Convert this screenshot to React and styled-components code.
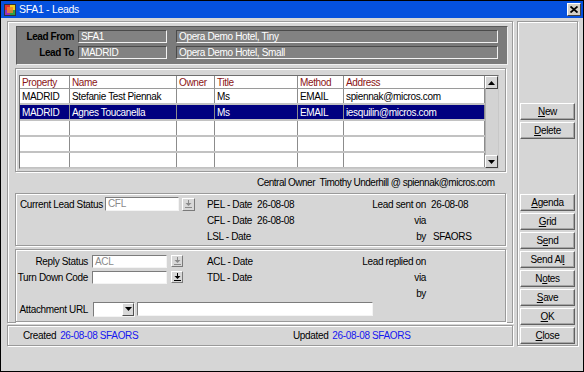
import React from "react";
import styled, { createGlobalStyle, css } from "styled-components";

const FONT = `"Liberation Sans", Arial, Helvetica, sans-serif`;

const GlobalStyle = createGlobalStyle`
  html, body { margin: 0; padding: 0; background: #d6d6d6; }
  body { font-family: ${FONT}; font-size: 10px; letter-spacing: -0.35px; color: #000; }
  *, *::before, *::after { box-sizing: border-box; }
`;

const etched = css`
  border: 1px solid #9a9a9a;
  box-shadow: inset 1px 1px 0 #fff, 1px 1px 0 #fff;
`;

const Window = styled.div`
  width: 584px;
  height: 372px;
  border: 1px solid #000;
  background: #d6d6d6;
  display: flex;
  flex-direction: column;
  overflow: hidden;
`;

const TitleBar = styled.div`
  height: 17px;
  flex: none;
  background: #0551de;
  color: #fff;
  display: flex;
  align-items: center;
  padding: 0 2px 0 3px;
  gap: 3px;
  font-size: 10.5px;
  letter-spacing: -0.3px;
`;

const TitleText = styled.span`
  flex: 1;
  line-height: 17px;
`;

const CloseBox = styled.div`
  width: 14px;
  height: 13px;
  background: #d4d0c8;
  border: 1px solid;
  border-color: #fff #404040 #404040 #fff;
  display: flex;
  align-items: center;
  justify-content: center;
`;

const Body = styled.div`
  flex: 1;
  display: flex;
  gap: 4px;
  padding: 3px 4px 0 6px;
  min-height: 0;
`;

const LeftCol = styled.div`
  width: 506px;
  display: flex;
  flex-direction: column;
  gap: 2px;
`;

const MainFrame = styled.div`
  ${etched};
  height: 302px;
  padding: 4px 4px 0 8px;
  display: flex;
  flex-direction: column;
`;

const HeaderPanel = styled.div`
  height: 39px;
  flex: none;
  background: #7b7b7b;
  border: 1px solid;
  border-color: #5a5a5a #f0f0f0 #f0f0f0 #5a5a5a;
  padding: 3px 9px 0 0;
  display: flex;
  flex-direction: column;
  gap: 3px;
`;

const HeaderRow = styled.div`
  display: flex;
  align-items: center;
  height: 13px;
`;

const HeaderLabel = styled.div`
  width: 57px;
  text-align: right;
  font-weight: bold;
  margin-right: 4px;
  letter-spacing: -0.4px;
`;

const HeaderField = styled.div`
  width: ${(p) => (p.$wide ? "auto" : "89px")};
  flex: ${(p) => (p.$wide ? "1" : "none")};
  margin-left: ${(p) => (p.$wide ? "9px" : "0")};
  height: 13px;
  background: #828282;
  border: 1px solid;
  border-color: #4a4a4a #f2f2f2 #f2f2f2 #4a4a4a;
  color: #fff;
  padding-left: 2px;
  line-height: 11px;
  white-space: nowrap;
  overflow: hidden;
`;

const GridGroup = styled.div`
  ${etched};
  margin: 3px 2px 0 -1px;
  padding: 6px 6px 2px 3px;
  height: 104px;
  flex: none;
`;

const Grid = styled.div`
  display: flex;
  width: 480px;
  height: 94px;
  border: 1px solid #6e6e6e;
  border-right-color: #c8c8c8;
  border-bottom-color: #c8c8c8;
  background: #fff;
  overflow: hidden;
`;

const GridTable = styled.div`
  width: 465px;
  display: flex;
  flex-direction: column;
`;

const cols = "50px 107px 38px 83px 46px 141px";

const GridRow = styled.div`
  display: grid;
  grid-template-columns: ${cols};
  height: ${(p) => (p.$head ? "13px" : "16px")};
  flex: none;
  border-bottom: ${(p) => (p.$head ? "1px solid #9a9a9a" : "2px solid #c2c2c2")};
  background: ${(p) => (p.$selected ? "#000080" : "#fff")};
  color: ${(p) => (p.$head ? "#8b1414" : p.$selected ? "#fff" : "#000")};
`;

const Cell = styled.div`
  border-right: 1px solid #8c8c8c;
  padding-left: 2px;
  display: flex;
  align-items: center;
  white-space: nowrap;
  overflow: hidden;
`;

const ScrollBar = styled.div`
  width: 13px;
  flex: none;
  background: #d3d3d3;
  border-left: 1px solid #b0b0b0;
  display: flex;
  flex-direction: column;
  justify-content: space-between;
`;

const ScrollBtn = styled.div`
  width: 13px;
  height: 13px;
  margin-left: -1px;
  background: #d6d6d6;
  border: 1px solid;
  border-color: #fff #404040 #404040 #fff;
  display: flex;
  align-items: center;
  justify-content: center;
`;

const OwnerLine = styled.div`
  height: 21px;
  flex: none;
  margin: 0 2px 0 -1px;
  padding: 0 6px 0 242px;
  display: flex;
  align-items: center;
  white-space: nowrap;
  letter-spacing: -0.5px;
`;

const Panel = styled.div`
  ${etched};
  margin: ${(p) => (p.$gapTop ? "3px" : "0")} 2px 0 -1px;
  height: ${(p) => p.$h}px;
  flex: none;
  padding-top: ${(p) => p.$pt}px;
  display: flex;
  flex-direction: column;
`;

const PanelCols = styled.div`
  display: flex;
`;

const Block = styled.div`
  width: ${(p) => (p.$w ? `${p.$w}px` : "auto")};
  flex: ${(p) => (p.$w ? "none" : "1")};
  display: flex;
  flex-direction: column;
`;

const Line = styled.div`
  height: 16px;
  display: flex;
  align-items: center;
  white-space: nowrap;
`;

const Label = styled.div`
  width: ${(p) => p.$w}px;
  flex: none;
  text-align: ${(p) => (p.$right ? "right" : "left")};
  padding-left: ${(p) => p.$pl || 0}px;
  margin-right: ${(p) => p.$mr || 0}px;
  white-space: nowrap;
`;

const Value = styled.div`
  margin-left: ${(p) => p.$ml || 0}px;
  color: ${(p) => (p.$blue ? "#1515f0" : "inherit")};
`;

const TextField = styled.div`
  width: ${(p) => p.$w}px;
  height: ${(p) => p.$h || 14}px;
  flex: none;
  background: #fff;
  border: 1px solid;
  border-color: #7c7c7c #f4f4f4 #f4f4f4 #7c7c7c;
  color: #8a8a8a;
  padding-left: 2px;
  line-height: ${(p) => (p.$h || 14) - 2}px;
  margin-right: ${(p) => p.$mr || 0}px;
`;

const DropBtn = styled.div`
  width: ${(p) => p.$s}px;
  height: ${(p) => p.$s}px;
  flex: none;
  background: #d8d8d8;
  border: 1px solid;
  border-color: #fff #7a7a7a #7a7a7a #fff;
  display: flex;
  align-items: center;
  justify-content: center;
`;

const Combo = styled.div`
  width: 42px;
  height: 15px;
  flex: none;
  background: #fff;
  border: 1px solid;
  border-color: #7c7c7c #f4f4f4 #f4f4f4 #7c7c7c;
  display: flex;
  justify-content: flex-end;
  margin-right: 2px;
`;

const ComboBtn = styled.div`
  width: 12px;
  height: 13px;
  background: #d8d8d8;
  border: 1px solid;
  border-color: #fff #505050 #505050 #fff;
  display: flex;
  align-items: center;
  justify-content: center;
`;

const Footer = styled.div`
  ${etched};
  height: 21px;
  flex: none;
  display: grid;
  grid-template-columns: 270px 1fr;
  align-items: center;
  padding-left: 15px;
`;

const FooterItem = styled.div`
  display: flex;
  gap: 4px;
  white-space: nowrap;
`;

const RightPanel = styled.div`
  ${etched};
  width: 61px;
  height: 325px;
  flex: none;
  display: flex;
  flex-direction: column;
  padding: 81px 2px 1px 2px;
`;

const BtnGroup = styled.div`
  display: flex;
  flex-direction: column;
  gap: 2px;
  margin-top: ${(p) => (p.$bottom ? "auto" : "0")};
`;

const Button = styled.div`
  width: 55px;
  height: 17px;
  background: #d6d6d6;
  border: 1px solid;
  border-color: #fff #606060 #606060 #fff;
  box-shadow: inset -1px -1px 0 #a6a6a6;
  display: flex;
  align-items: center;
  justify-content: center;
  white-space: nowrap;
  u { text-decoration: underline; text-underline-offset: 1px; }
`;

const ArrowBar = ({ color }) => (
  <svg width="7" height="8" viewBox="0 0 7 8">
    <rect x="3" y="0" width="1" height="4" fill={color} />
    <polygon points="0.5,3 6.5,3 3.5,6" fill={color} />
    <rect x="0" y="7" width="7" height="1" fill={color} />
  </svg>
);

const Tri = ({ up }) => (
  <svg width="7" height="4" viewBox="0 0 7 4">
    <polygon points={up ? "3.5,0 7,4 0,4" : "0,0 7,0 3.5,4"} fill="#000" />
  </svg>
);

const AppIcon = () => (
  <svg width="12" height="12" viewBox="0 0 12 12">
    <rect x="0" y="0" width="12" height="12" fill="#fff" />
    <rect x="1" y="1" width="5" height="5" fill="#e03030" />
    <rect x="6" y="1" width="5" height="5" fill="#f0d020" />
    <rect x="1" y="6" width="5" height="5" fill="#9030c0" />
    <rect x="6" y="6" width="5" height="5" fill="#30a040" />
    <rect x="3" y="3" width="6" height="6" fill="#f08030" opacity="0.8" />
    <rect x="0.5" y="0.5" width="11" height="11" fill="none" stroke="#333" strokeWidth="1" />
  </svg>
);

const CloseX = () => (
  <svg width="8" height="7" viewBox="0 0 8 7">
    <path d="M0.5 0.5 L7.5 6.5 M7.5 0.5 L0.5 6.5" stroke="#000" strokeWidth="1.8" />
  </svg>
);

const rows = [
  { p: "MADRID", n: "Stefanie Test Piennak", o: "", t: "Ms", m: "EMAIL", a: "spiennak@micros.com" },
  { p: "MADRID", n: "Agnes Toucanella", o: "", t: "Ms", m: "EMAIL", a: "iesquilin@micros.com", sel: true },
  { p: "", n: "", o: "", t: "", m: "", a: "" },
  { p: "", n: "", o: "", t: "", m: "", a: "" },
  { p: "", n: "", o: "", t: "", m: "", a: "" },
];

export default function App() {
  return (
    <>
      <GlobalStyle />
      <Window>
        <TitleBar>
          <AppIcon />
          <TitleText>SFA1 - Leads</TitleText>
          <CloseBox>
            <CloseX />
          </CloseBox>
        </TitleBar>
        <Body>
          <LeftCol>
            <MainFrame>
              <HeaderPanel>
                <HeaderRow>
                  <HeaderLabel>Lead From</HeaderLabel>
                  <HeaderField>SFA1</HeaderField>
                  <HeaderField $wide>Opera Demo Hotel, Tiny</HeaderField>
                </HeaderRow>
                <HeaderRow>
                  <HeaderLabel>Lead To</HeaderLabel>
                  <HeaderField>MADRID</HeaderField>
                  <HeaderField $wide>Opera Demo Hotel, Small</HeaderField>
                </HeaderRow>
              </HeaderPanel>

              <GridGroup>
                <Grid>
                  <GridTable>
                    <GridRow $head>
                      <Cell>Property</Cell>
                      <Cell>Name</Cell>
                      <Cell>Owner</Cell>
                      <Cell>Title</Cell>
                      <Cell>Method</Cell>
                      <Cell>Address</Cell>
                    </GridRow>
                    {rows.map((r, i) => (
                      <GridRow key={i} $selected={r.sel}>
                        <Cell>{r.p}</Cell>
                        <Cell>{r.n}</Cell>
                        <Cell>{r.o}</Cell>
                        <Cell>{r.t}</Cell>
                        <Cell>{r.m}</Cell>
                        <Cell>{r.a}</Cell>
                      </GridRow>
                    ))}
                  </GridTable>
                  <ScrollBar>
                    <ScrollBtn>
                      <Tri up />
                    </ScrollBtn>
                    <ScrollBtn>
                      <Tri />
                    </ScrollBtn>
                  </ScrollBar>
                </Grid>
              </GridGroup>

              <OwnerLine>Central Owner&nbsp;&nbsp;Timothy Underhill @ spiennak@micros.com</OwnerLine>

              <Panel $h={53} $pt={2}>
                <PanelCols>
                  <Block $w={191}>
                    <Line>
                      <Label $w={89} $pl={4}>Current Lead Status</Label>
                      <TextField $w={74} $mr={3}>CFL</TextField>
                      <DropBtn $s={13}>
                        <ArrowBar color="#8a8a8a" />
                      </DropBtn>
                    </Line>
                  </Block>
                  <Block $w={150}>
                    <Line>
                      <Label $w={50}>PEL - Date</Label>
                      <Value>26-08-08</Value>
                    </Line>
                    <Line>
                      <Label $w={50}>CFL - Date</Label>
                      <Value>26-08-08</Value>
                    </Line>
                    <Line>
                      <Label $w={50}>LSL - Date</Label>
                    </Line>
                  </Block>
                  <Block>
                    <Line>
                      <Label $w={69} $right>Lead sent on</Label>
                      <Value $ml={5}>26-08-08</Value>
                    </Line>
                    <Line>
                      <Label $w={69} $right>via</Label>
                    </Line>
                    <Line>
                      <Label $w={69} $right>by</Label>
                      <Value $ml={7}>SFAORS</Value>
                    </Line>
                  </Block>
                </PanelCols>
              </Panel>

              <Panel $gapTop $h={73} $pt={3}>
                <PanelCols>
                  <Block $w={191}>
                    <Line>
                      <Label $w={72} $right $mr={4}>Reply Status</Label>
                      <TextField $w={75} $h={13} $mr={4}>ACL</TextField>
                      <DropBtn $s={12}>
                        <ArrowBar color="#8a8a8a" />
                      </DropBtn>
                    </Line>
                    <Line>
                      <Label $w={72} $right $mr={4}>Turn Down Code</Label>
                      <TextField $w={75} $h={13} $mr={4} />
                      <DropBtn $s={12}>
                        <ArrowBar color="#000" />
                      </DropBtn>
                    </Line>
                  </Block>
                  <Block $w={150}>
                    <Line>
                      <Label $w={50}>ACL - Date</Label>
                    </Line>
                    <Line>
                      <Label $w={50}>TDL - Date</Label>
                    </Line>
                  </Block>
                  <Block>
                    <Line>
                      <Label $w={69} $right>Lead replied on</Label>
                    </Line>
                    <Line>
                      <Label $w={69} $right>via</Label>
                    </Line>
                    <Line>
                      <Label $w={69} $right>by</Label>
                    </Line>
                  </Block>
                </PanelCols>
                <Line>
                  <Label $w={72} $right $mr={5}>Attachment URL</Label>
                  <Combo>
                    <ComboBtn>
                      <Tri />
                    </ComboBtn>
                  </Combo>
                  <TextField $w={236} $h={14} />
                </Line>
              </Panel>
            </MainFrame>
            <Footer>
              <FooterItem>
                <span>Created</span>
                <Value $blue>26-08-08 SFAORS</Value>
              </FooterItem>
              <FooterItem>
                <span>Updated</span>
                <Value $blue>26-08-08 SFAORS</Value>
              </FooterItem>
            </Footer>
          </LeftCol>
          <RightPanel>
            <BtnGroup>
              <Button><u>N</u>ew</Button>
              <Button><u>D</u>elete</Button>
            </BtnGroup>
            <BtnGroup $bottom>
              <Button><u>A</u>genda</Button>
              <Button><u>G</u>rid</Button>
              <Button>S<u>e</u>nd</Button>
              <Button>Send Al<u>l</u></Button>
              <Button>N<u>o</u>tes</Button>
              <Button><u>S</u>ave</Button>
              <Button><u>O</u>K</Button>
              <Button><u>C</u>lose</Button>
            </BtnGroup>
          </RightPanel>
        </Body>
      </Window>
    </>
  );
}
